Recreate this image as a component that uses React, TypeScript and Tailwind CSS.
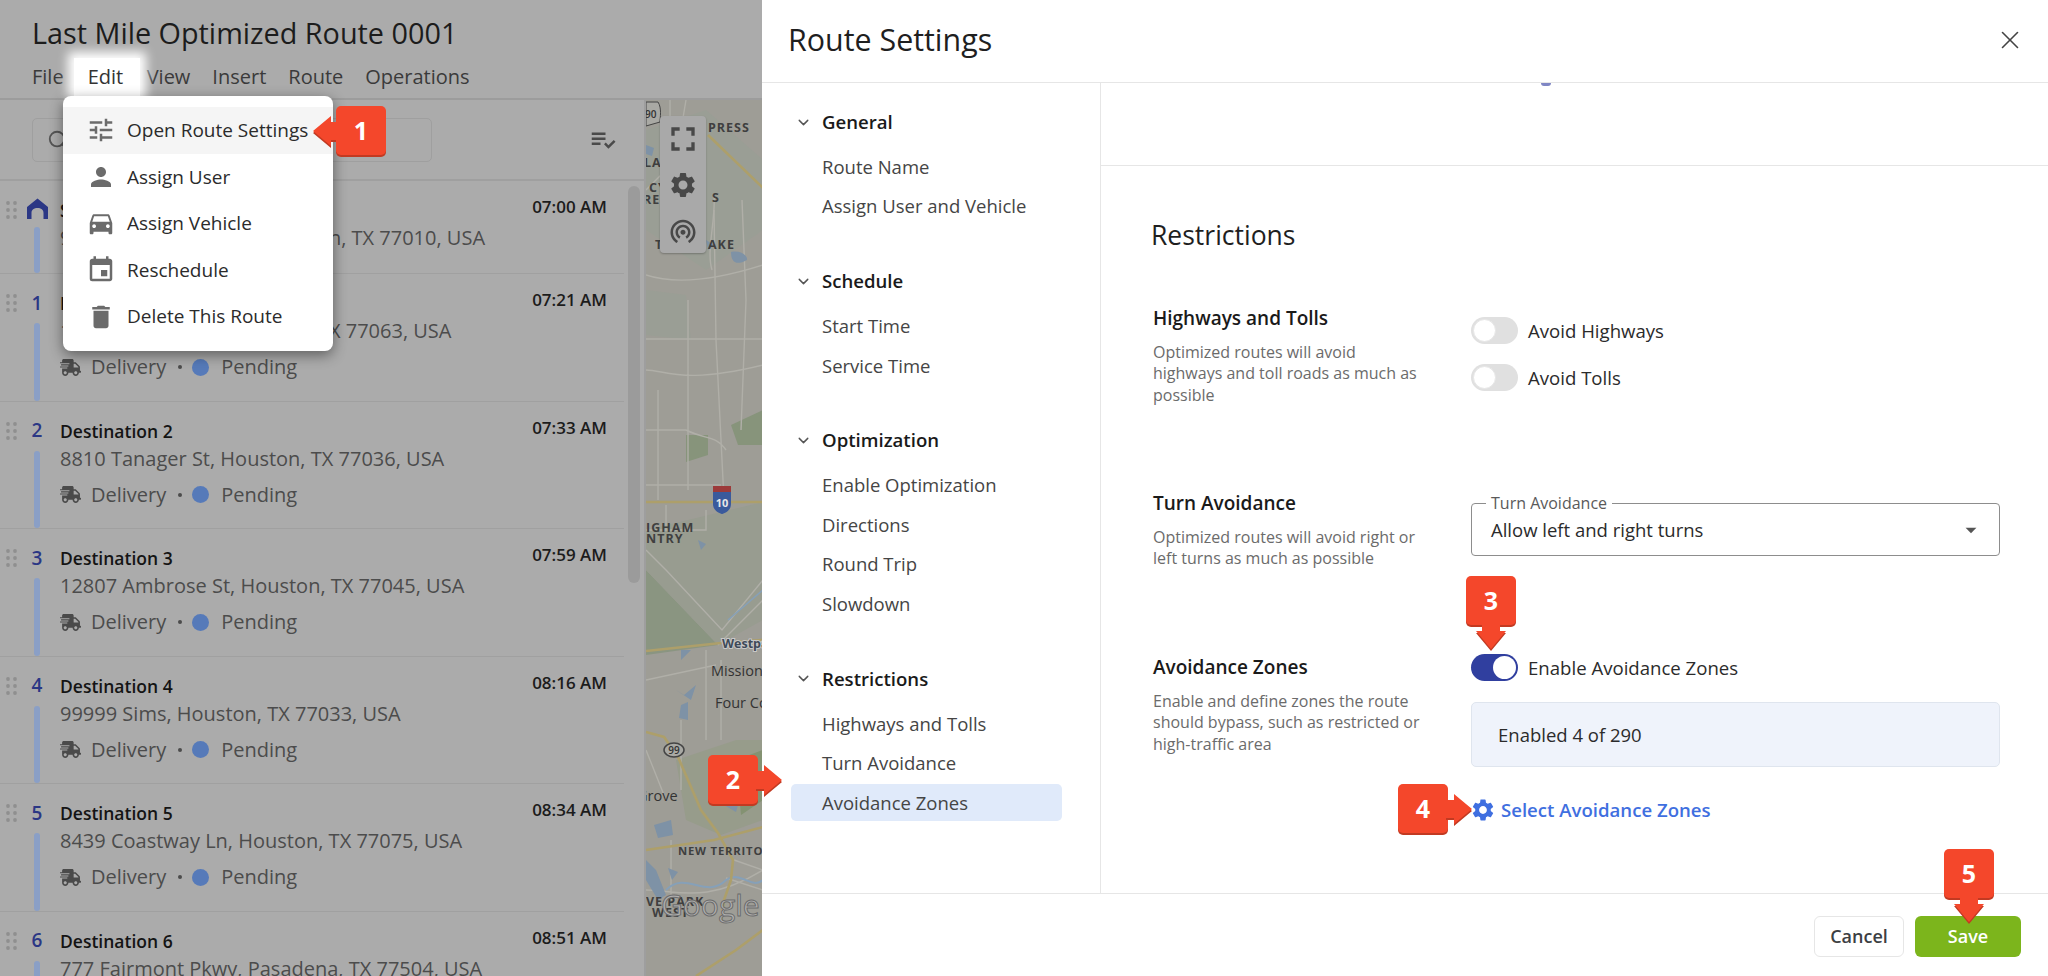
import { ChevronDown, Search, X } from 'lucide-react';
import { FaShippingFast } from 'react-icons/fa';
import {
  MdArrowDropDown,
  MdDelete,
  MdDirectionsCar,
  MdEvent,
  MdFullscreen,
  MdPerson,
  MdPlaylistAddCheck,
  MdSettings,
  MdTune,
  MdWifiTethering,
} from 'react-icons/md';

const stops = [
  { label: '1', title: 'Destination 1', time: '07:21 AM', address: '1160 Gessner Rd, Houston, TX 77063, USA' },
  { label: '2', title: 'Destination 2', time: '07:33 AM', address: '8810 Tanager St, Houston, TX 77036, USA' },
  { label: '3', title: 'Destination 3', time: '07:59 AM', address: '12807 Ambrose St, Houston, TX 77045, USA' },
  { label: '4', title: 'Destination 4', time: '08:16 AM', address: '99999 Sims, Houston, TX 77033, USA' },
  { label: '5', title: 'Destination 5', time: '08:34 AM', address: '8439 Coastway Ln, Houston, TX 77075, USA' },
  { label: '6', title: 'Destination 6', time: '08:51 AM', address: '777 Fairmont Pkwy, Pasadena, TX 77504, USA' },
];

const menuItems = [
  { label: 'Open Route Settings', icon: MdTune, active: true },
  { label: 'Assign User', icon: MdPerson },
  { label: 'Assign Vehicle', icon: MdDirectionsCar },
  { label: 'Reschedule', icon: MdEvent },
  { label: 'Delete This Route', icon: MdDelete },
];

const navGroups = [
  { title: 'General', items: ['Route Name', 'Assign User and Vehicle'] },
  { title: 'Schedule', items: ['Start Time', 'Service Time'] },
  { title: 'Optimization', items: ['Enable Optimization', 'Directions', 'Round Trip', 'Slowdown'] },
  { title: 'Restrictions', items: ['Highways and Tolls', 'Turn Avoidance', 'Avoidance Zones'] },
];

function DragDots() {
  return (
    <svg width="11" height="18" viewBox="0 0 11 18" className="shrink-0 fill-[#8f8f8f]">
      {[2, 9].map((x) => [2, 9, 16].map((y) => <circle key={`${x}-${y}`} cx={x} cy={y} r="1.9" />))}
    </svg>
  );
}

function HomeIcon() {
  return (
    <svg width="21" height="21" viewBox="0 0 21 21" className="fill-[#2b3785]">
      <path d="M10.5 0.5 L21 9 V21 H16.5 V15 C16.5 11.5 14 10 10.5 10 C7 10 4.5 11.5 4.5 15 V21 H0 V9Z" />
    </svg>
  );
}

function RouteRow({ label, title, time, address, first }: { label?: string; title: string; time: string; address: string; first?: boolean }) {
  return (
    <div className={`flex w-[624px] shrink-0 border-b border-[#a0a0a0] pl-[6px] pr-[17px] ${first ? 'h-[93px]' : 'h-[127.5px]'}`}>
      <div className="mt-[20px] w-[11px]">
        <DragDots />
      </div>
      <div className="ml-[2px] flex w-[36px] flex-col items-center pt-[16px]">
        <div className="flex h-[26px] items-center text-[19px] font-semibold text-[#2b3785]">
          {label ?? <HomeIcon />}
        </div>
        <div className={`mt-[7px] w-[6px] rounded-full bg-[#8a9fc6] ${first ? 'h-[52px]' : 'h-[87px]'}`} />
      </div>
      <div className="ml-[5px] flex-1 pt-[17px]">
        <div className="flex items-start justify-between">
          <span className="text-[17.5px] leading-[25px] font-semibold text-[#141414]">{title}</span>
          <span className="-mt-[3px] text-[17px] leading-[24px] font-semibold text-[#1c1c1c]">{time}</span>
        </div>
        <div className="mt-[1px] text-[20px] leading-[28px] text-[#4c4c4c]">{address}</div>
        {!first && (
          <div className="mt-[8px] flex h-[28px] items-center text-[20px] text-[#4c4c4c]">
            <FaShippingFast className="text-[21px] text-[#4a4a4a]" />
            <span className="ml-[10px]">Delivery</span>
            <span className="ml-[12px] h-[4px] w-[4px] rounded-full bg-[#4c4c4c]" />
            <span className="ml-[10px] h-[17px] w-[17px] rounded-full bg-[#567ab9]" />
            <span className="ml-[12px]">Pending</span>
          </div>
        )}
      </div>
    </div>
  );
}

// the map is a picture: roads, water and labels
function MapDrawing() {
  const label = 'font-bold fill-[#3f3f3f] text-[12.5px] tracking-[1px]';
  const place = 'fill-[#333] text-[14.5px] font-medium';
  return (
    <svg viewBox="0 0 117 876" width="117" height="876" className="block">
      <rect width="117" height="876" fill="#9e9d96" />
      <path d="M0 470 L72 545 L0 555Z" fill="#8a9581" />
      <path d="M0 430 L117 402 L117 520 L72 545 L0 470Z" fill="#989c90" />
      <path d="M0 30 L60 10 L117 60 L117 130 L60 170 L0 130Z" fill="#9a9e95" />
      <path d="M40 335 L62 335 L62 355 L40 362Z" fill="#87947b" />
      <path d="M85 325 L117 310 L117 345 L92 345Z" fill="#87947b" />
      <path d="M30 660 L90 640 L117 640 L117 720 L75 735 L40 720Z" fill="#979c8b" />
      <path d="M90 660 L117 650 L117 700 L95 715Z" fill="#849272" />
      <path d="M0 190 L40 195 L45 240 L0 235Z" fill="#9a9e95" />
      <g fill="none" stroke="#b0afa8" strokeWidth="1.4">
        <path d="M24 0 L24 60 M42 200 V390 M0 175 C30 185 70 180 117 165 M0 239 H117 M0 270 C20 270 35 285 117 265" />
        <path d="M68 110 L70 240 L78 400 M96 100 L100 200 L95 330 M12 290 V400 M0 330 H40 M40 330 C60 340 70 335 80 350" />
        <path d="M40 0 L30 60 L0 90 M68 95 C70 120 60 150 66 170 M0 430 H60 V410 M0 385 H75 M20 405 V430" />
        <path d="M0 450 L20 470 L76 530 L117 480 M72 545 L117 500 M0 580 L70 565 M60 550 V640 M75 560 V640 M35 620 V690 M0 650 L20 700" />
        <path d="M25 740 V800 M88 760 L117 770 M80 778 L117 790 M0 790 C30 790 60 805 117 770" />
      </g>
      <g fill="#7e92a6">
        <path d="M0 45 L8 48 L6 56 L0 54Z M85 152 C95 150 102 156 101 160 C90 166 85 162 85 152Z M60 140 L68 145 L62 150Z" />
        <path d="M52 440 L60 444 L55 450Z M35 550 L45 550 L35 560Z M30 590 L38 595 L50 585 L45 600Z M35 605 L42 602 L42 620 L33 618Z" />
        <path d="M8 725 L25 720 L27 735 L12 738Z M78 690 L95 695 L90 712 L78 705Z M0 760 L10 770 L20 795 L12 800 L0 780Z M22 768 L32 772 L26 780Z" />
      </g>
      <path d="M82 520 L117 490" stroke="#86a0b8" strokeWidth="1.5" fill="none" />
      <path d="M20 790 C40 770 60 800 80 780 C95 770 105 790 117 780" stroke="#86a0b8" strokeWidth="2" fill="none" />
      <g fill="none" stroke="#ad9f6a" strokeWidth="2.6">
        <path d="M0 402 H117" />
        <path d="M0 551 L75 543 L117 540" />
        <path d="M62 35 L117 88" />
        <path d="M0 632 L18 637 L32 657 L55 710 L72 733 L87 760 L85 780 L78 800 L75 822" />
        <path d="M0 750 L68 740 L117 727" />
        <path d="M50 876 L90 850 L117 830" />
      </g>
      <path d="M67 390 H85 V404 C85 412 76 414 76 414 C76 414 67 412 67 404Z" fill="#3a5a9c" />
      <path d="M67 386 H85 V392 H67Z" fill="#9c3a3a" />
      <text x="76" y="407" textAnchor="middle" className="fill-[#e8e8e8] text-[11px] font-bold">10</text>
      <path d="M0 2 H12 C16 8 14 18 14 22 L0 26Z" fill="#a9a9a4" stroke="#444" />
      <text x="-1" y="18" className="fill-[#333] text-[10px] font-semibold">90</text>
      <ellipse cx="28" cy="650" rx="10" ry="7" fill="#a9a9a4" stroke="#444" strokeWidth="1.5" />
      <text x="28" y="654" textAnchor="middle" className="fill-[#333] text-[10px] font-semibold">99</text>
      <text x="62" y="32" className={label}>PRESS</text>
      <text x="-2" y="67" className={label}>LA</text>
      <text x="3" y="92" className={label}>CY</text>
      <text x="-3" y="104" className={label}>REI</text>
      <text x="66" y="102" className={label}>S</text>
      <text x="9" y="149" className={label}>T</text>
      <text x="62" y="149" className={label}>AKE</text>
      <text x="0" y="432" className={label}>IGHAM</text>
      <text x="0" y="443" className={label}>NTRY</text>
      <text x="76" y="548" className="fill-[#3e4a58] stroke-[#c8c8c8] text-[12.5px] font-bold [paint-order:stroke] [stroke-width:2px]">Westpark</text>
      <text x="65" y="576" className={place}>Mission</text>
      <text x="69" y="608" className={place}>Four Corners</text>
      <text x="-9" y="701" className={place}>Grove</text>
      <text x="32" y="755" className="fill-[#3f3f3f] text-[11.3px] font-bold tracking-[0.8px]">NEW TERRITORY</text>
      <text x="0" y="806" className={label}>VE PARK</text>
      <text x="6" y="817" className={label}>WEST</text>
      <text x="15" y="816" className="fill-[#b0b0b0] stroke-[#6c6c6c] text-[30px] font-medium [stroke-width:1px]">Google</text>
    </svg>
  );
}

function Toggle({ on }: { on?: boolean }) {
  return (
    <span className={`flex h-[27px] w-[47px] shrink-0 rounded-full p-[2px] ${on ? 'justify-end bg-[#303f9f]' : 'bg-[#e0e0e0]'}`}>
      <span className={`h-[23px] w-[23px] rounded-full bg-white ${on ? '' : 'border border-[#e6e6e6]'}`} />
    </span>
  );
}

function SectionText({ title, lines }: { title: string; lines: string[] }) {
  return (
    <div className="w-[318px] shrink-0">
      <div className="text-[19px] leading-[24px] font-semibold text-[#1a1a1a]">{title}</div>
      <div className="mt-[12px] text-[16px] leading-[21.3px] text-[#6b6b6b]">
        {lines.map((line) => (
          <div key={line}>{line}</div>
        ))}
      </div>
    </div>
  );
}

function ToggleRow({ label, on }: { label: string; on?: boolean }) {
  return (
    <div className="flex h-[27px] items-center gap-[10px] text-[18.6px] text-[#2b2b2b]">
      <Toggle on={on} />
      <span>{label}</span>
    </div>
  );
}

function BadgeArrow({ direction }: { direction: 'left' | 'right' | 'down' }) {
  const points = {
    left: '0,15 18,0 18,6 26,6 26,24 18,24 18,30',
    right: '26,15 8,0 8,6 0,6 0,24 8,24 8,30',
    down: '15,26 0,8 6,8 6,0 24,0 24,8 30,8',
  }[direction];
  const size = direction === 'down' ? 'h-[26px] w-[30px]' : 'h-[30px] w-[26px]';
  return (
    <svg viewBox={direction === 'down' ? '0 0 30 26' : '0 0 26 30'} className={`${size} overflow-visible`}>
      <polygon points={points} fill="#c23a22" transform="translate(0 2)" />
      <polygon points={points} fill="#f4472b" />
    </svg>
  );
}

function Badge({ n, direction, className }: { n: string; direction: 'left' | 'right' | 'down'; className: string }) {
  const layout = { left: 'flex-row-reverse items-center', right: 'flex-row items-center', down: 'flex-col items-center' }[direction];
  return (
    <div className={`absolute z-30 flex ${layout} ${className}`}>
      <div className="flex h-[49px] w-[50px] items-center justify-center rounded-[5px] bg-[#f4472b] text-[25px] font-bold text-white shadow-[0_2px_0_#c23a22]">
        {n}
      </div>
      <div className={direction === 'left' ? '-mr-[3px]' : direction === 'right' ? '-ml-[2px]' : '-mt-[2px]'}>
        <BadgeArrow direction={direction} />
      </div>
    </div>
  );
}

export default function App() {
  return (
    <div className="relative flex h-[976px] w-[2048px] overflow-hidden bg-white font-['Open_Sans',sans-serif]">
      {/* Dimmed route editor */}
      <div className="flex w-[762px] shrink-0 flex-col bg-[#ababab]">
        <div className="h-[100px] shrink-0 border-b-2 border-[#9c9c9c] pl-[32px]">
          <h1 className="pt-[12px] text-[28.8px] leading-[42px] text-[#1c1c1c]">Last Mile Optimized Route 0001</h1>
          <div className="mt-[4px] flex items-center gap-[22px] text-[20px] leading-[28px] text-[#3a3a3a]">
            <span>File</span>
            <span className="relative z-10 -ml-[12px] -mr-[15px] flex h-[38px] w-[66px] items-center bg-white pl-[14px] text-[#333] shadow-[0_0_10px_6px_white]">Edit</span>
            <span>View</span>
            <span>Insert</span>
            <span>Route</span>
            <span>Operations</span>
          </div>
        </div>
        <div className="flex min-h-0 flex-1">
          <div className="flex w-[646px] shrink-0 flex-col border-r-2 border-[#9e9e9e]">
            <div className="flex h-[81px] shrink-0 items-center border-b-2 border-[#9f9f9f] pl-[32px] pr-[26px]">
              <div className="flex h-[44px] w-[400px] items-center rounded-[5px] border border-[#9f9f9f] pl-[14px]">
                <Search className="h-[22px] w-[22px] text-[#555]" />
              </div>
              <MdPlaylistAddCheck className="ml-auto text-[30px] text-[#4a4a4a]" />
            </div>
            <div className="relative flex min-h-0 flex-1 flex-col overflow-hidden">
              <RouteRow first title="Start" time="07:00 AM" address="9220 S Almeda Road, Houston, TX 77010, USA" />
              {stops.map((stop) => (
                <RouteRow key={stop.label} {...stop} />
              ))}
              <div className="absolute right-[4px] top-[5px] h-[397px] w-[12px] rounded-full bg-[#9b9b9b]" />
            </div>
          </div>
          <div className="relative min-w-0 flex-1 overflow-hidden">
            <MapDrawing />
            <div className="absolute left-[14px] top-[16px] flex h-[137px] w-[46px] flex-col items-center rounded-[4px] bg-[#a9a9a9] text-[#484848] shadow-[0_1px_2px_rgba(0,0,0,0.25)]">
              <div className="flex h-[46px] items-center"><MdFullscreen className="text-[40px]" /></div>
              <div className="flex h-[46px] items-center"><MdSettings className="text-[30px]" /></div>
              <div className="flex h-[45px] items-center"><MdWifiTethering className="text-[30px]" /></div>
            </div>
          </div>
        </div>
      </div>

      {/* Edit menu */}
      <div className="absolute left-[63px] top-[96px] z-20 h-[255px] w-[270px] rounded-[8px] bg-white pt-[11px] text-[19px] text-[#2b2b2b] shadow-[0_4px_14px_rgba(0,0,0,0.45)]">
        {menuItems.map(({ label, icon: Icon, active }) => (
          <div key={label} className={`flex h-[46.6px] items-center pl-[23px] ${active ? 'bg-[#f5f5f5]' : ''}`}>
            <Icon className="text-[30px] text-[#6b6b6b]" />
            <span className="ml-[11px]">{label}</span>
          </div>
        ))}
      </div>

      {/* Route settings drawer */}
      <div className="flex min-w-0 flex-1 flex-col bg-white">
        <div className="flex h-[83px] shrink-0 items-center justify-between border-b border-[#e6e6e6] pl-[26px] pr-[23px]">
          <h2 className="-mt-[2px] text-[30.4px] leading-[40px] text-[#1f1f1f]">Route Settings</h2>
          <X className="-mt-[3px] h-[30px] w-[30px] text-[#444]" strokeWidth={1.3} />
        </div>
        <div className="flex min-h-0 flex-1">
          <div className="w-[339px] shrink-0 border-r border-[#e6e6e6] pt-[19px]">
            {navGroups.map((group) => (
              <div key={group.title} className="mb-[36.5px]">
                <div className="mb-[6px] flex h-[40px] items-center pl-[33px] text-[18.6px] font-semibold text-[#1a1a1a]">
                  <ChevronDown className="h-[17px] w-[17px] text-[#555]" />
                  <span className="ml-[10px]">{group.title}</span>
                </div>
                {group.items.map((item) => (
                  <div
                    key={item}
                    className={`mb-[2.7px] ml-[29px] flex h-[37px] w-[271px] items-center rounded-[5px] pl-[31px] text-[18.5px] text-[#454545] ${
                      item === 'Avoidance Zones' ? 'bg-[#e0eafa]' : ''
                    }`}
                  >
                    {item}
                  </div>
                ))}
              </div>
            ))}
          </div>
          <div className="min-w-0 flex-1">
            <div className="relative h-[83px] border-b border-[#e6e6e6]">
              <span className="absolute left-[440px] top-0 h-[3px] w-[10px] rounded-b-full bg-[#7f86c4]" />
            </div>
            <div className="pl-[52px] pt-[51px]">
              <div className="-ml-[2px] mb-[53px] text-[26.5px] leading-[36px] text-[#1f1f1f]">Restrictions</div>
              <div className="flex h-[185px]">
                <SectionText title="Highways and Tolls" lines={['Optimized routes will avoid', 'highways and toll roads as much as', 'possible']} />
                <div className="flex flex-col gap-[20px] pt-[11px]">
                  <ToggleRow label="Avoid Highways" />
                  <ToggleRow label="Avoid Tolls" />
                </div>
              </div>
              <div className="flex h-[164px]">
                <SectionText title="Turn Avoidance" lines={['Optimized routes will avoid right or', 'left turns as much as possible']} />
                <div className="relative mt-[12px] flex h-[53px] w-[529px] items-center justify-between rounded-[4px] border border-[#8d8d8d] pl-[19px] pr-[15px] text-[18.5px] text-[#2b2b2b]">
                  <span className="absolute -top-[10px] left-[14px] bg-white px-[5px] text-[16px] leading-[18px] text-[#5a5a5a]">Turn Avoidance</span>
                  <span>Allow left and right turns</span>
                  <MdArrowDropDown className="text-[26px] text-[#555]" />
                </div>
              </div>
              <div className="flex">
                <SectionText
                  title="Avoidance Zones"
                  lines={['Enable and define zones the route', 'should bypass, such as restricted or', 'high-traffic area']}
                />
                <div className="-mt-[1px] w-[529px]">
                  <ToggleRow label="Enable Avoidance Zones" on />
                  <div className="mt-[21px] flex h-[65px] items-center rounded-[5px] border border-[#dfe5ee] bg-[#eff3fb] pl-[26px] text-[18.5px] text-[#2b2b2b]">
                    Enabled 4 of 290
                  </div>
                  <div className="mt-[29px] flex h-[28px] items-center text-[18.6px] font-semibold text-[#3f6fe0]">
                    <MdSettings className="-ml-[1px] text-[26px]" />
                    <span className="ml-[5px]">Select Avoidance Zones</span>
                  </div>
                </div>
              </div>
            </div>
          </div>
        </div>
        <div className="flex h-[83px] shrink-0 items-start justify-end gap-[11px] border-t border-[#e6e6e6] pr-[27px] pt-[22px] text-[18px] font-semibold">
          <button className="h-[41px] w-[90px] rounded-[6px] border border-[#e6e6e6] text-[#3c4043]">Cancel</button>
          <button className="h-[41px] w-[106px] rounded-[6px] bg-[#7cb51c] text-white">Save</button>
        </div>
      </div>

      <Badge n="1" direction="left" className="left-[313px] top-[106px]" />
      <Badge n="2" direction="right" className="left-[708px] top-[755px]" />
      <Badge n="3" direction="down" className="left-[1466px] top-[576px]" />
      <Badge n="4" direction="right" className="left-[1398px] top-[784px]" />
      <Badge n="5" direction="down" className="left-[1944px] top-[849px]" />
    </div>
  );
}
